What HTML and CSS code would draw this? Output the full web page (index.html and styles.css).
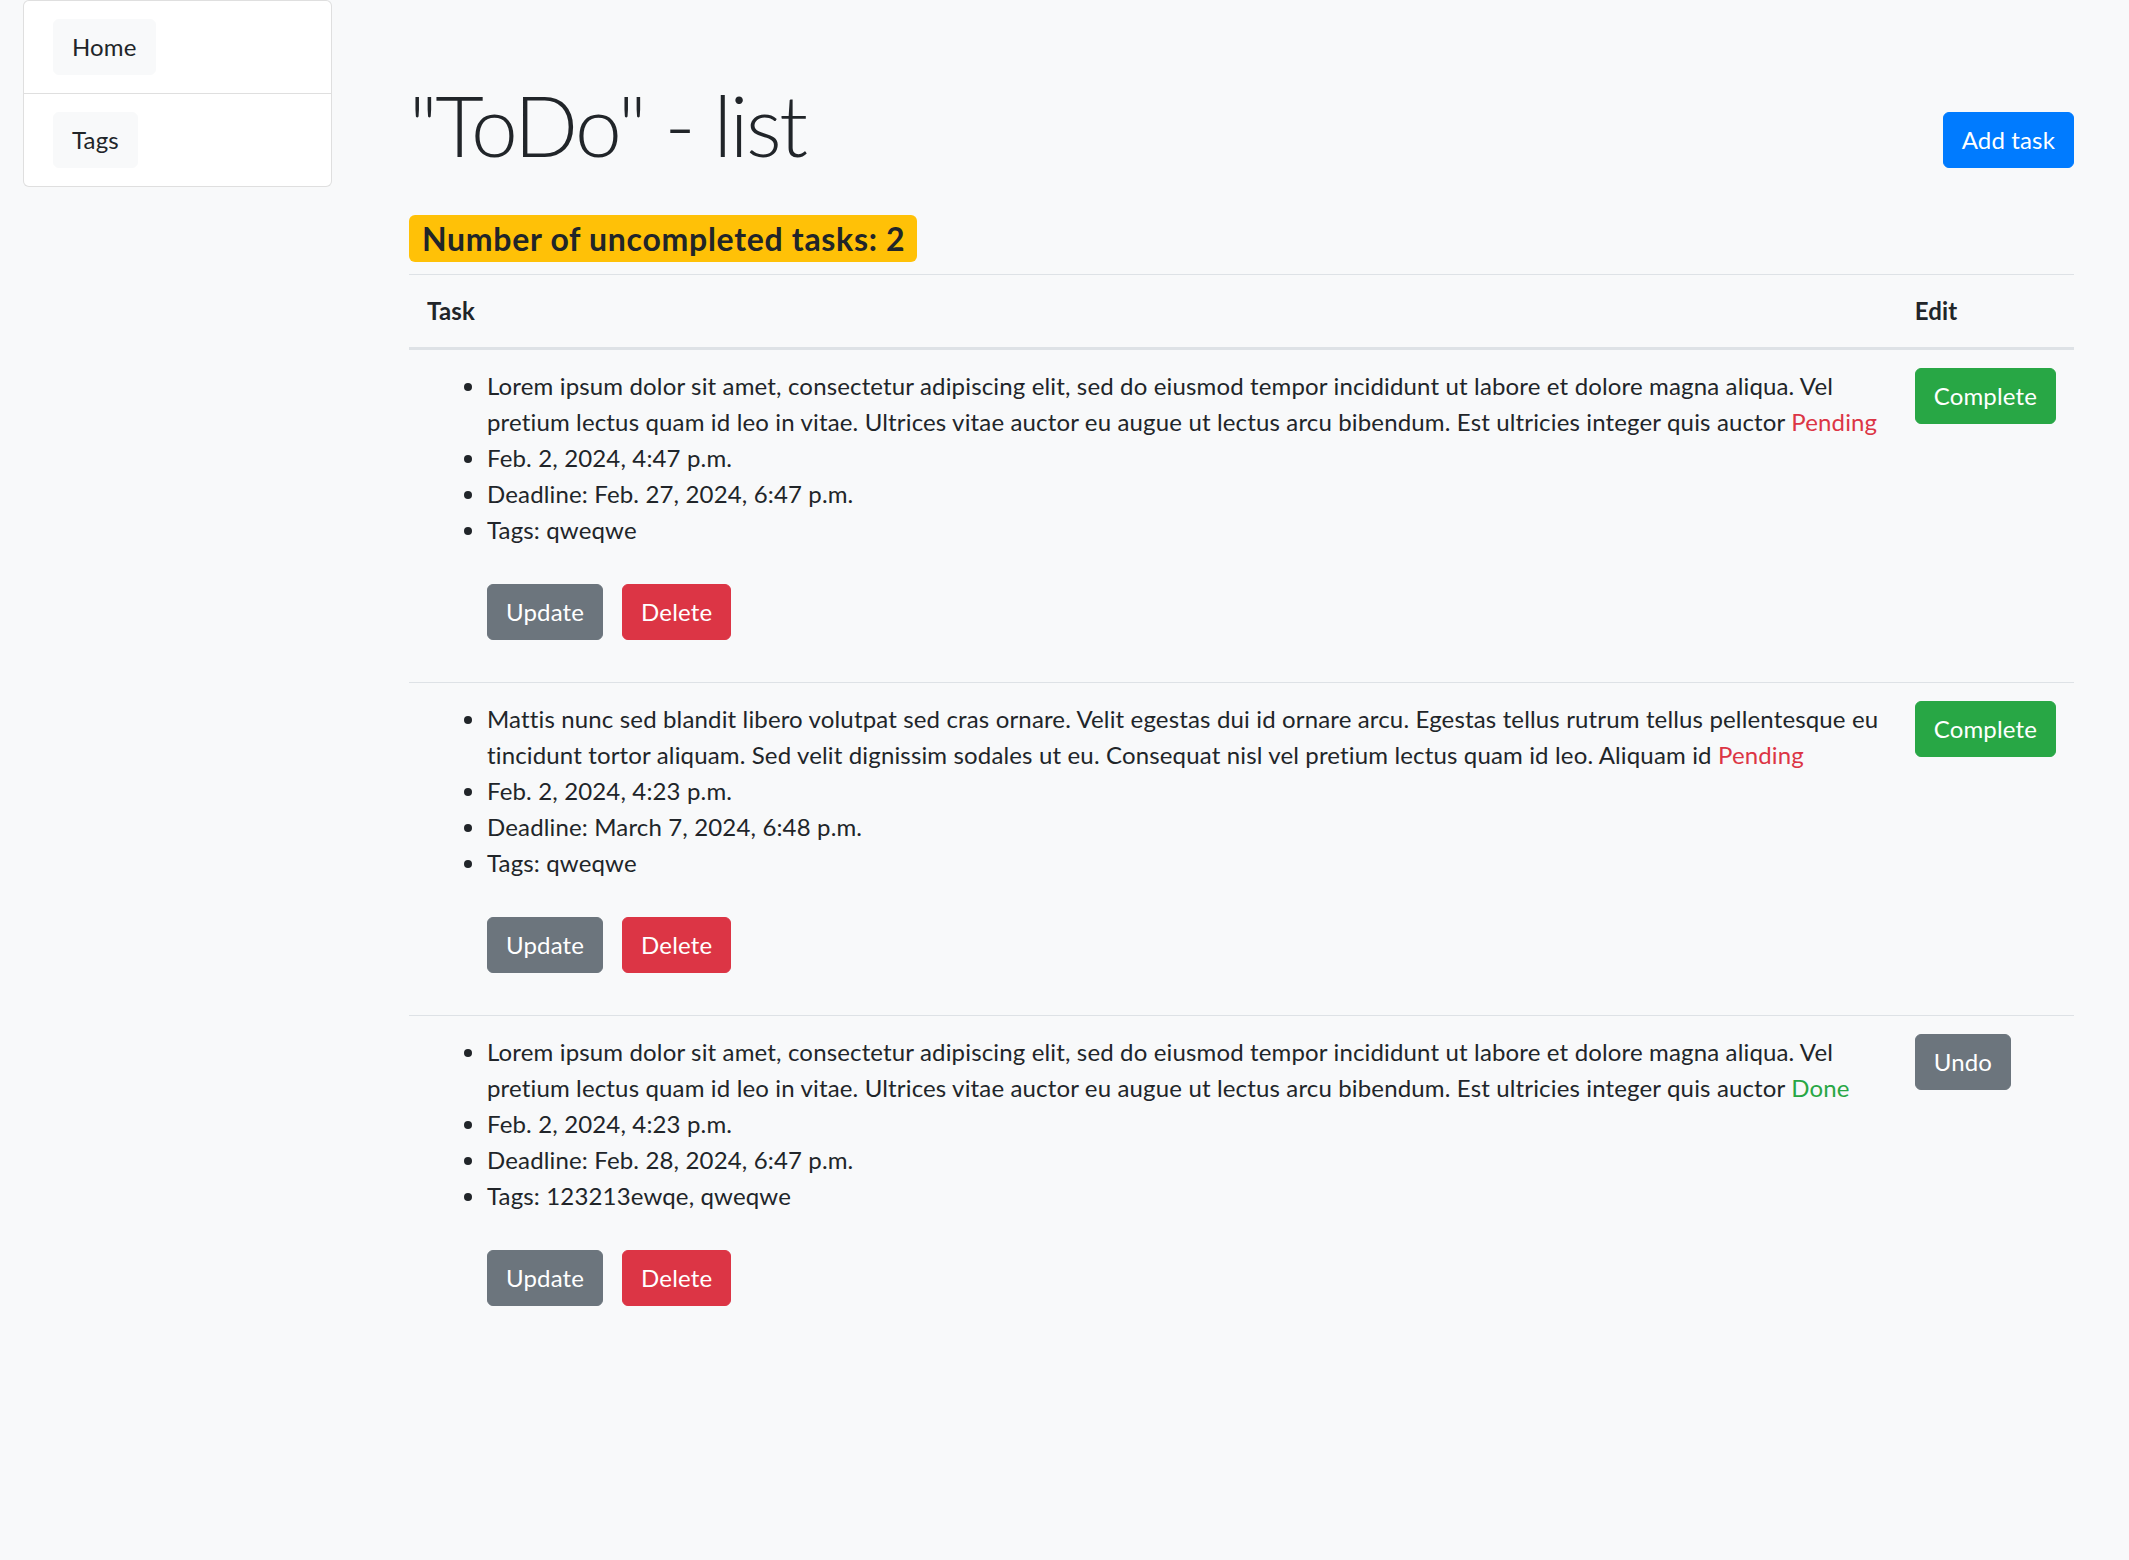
FILE: index.html
```html
<!DOCTYPE html>
<html lang="en">
<head>
<meta charset="utf-8">
<title>ToDo list</title>
<link rel="stylesheet" href="styles.css">
</head>
<body>
<div class="page">
  <aside class="sidebar">
    <div class="card">
      <div class="card-item"><a class="btn btn-light" href="#">Home</a></div>
      <div class="card-item"><a class="btn btn-light" href="#">Tags</a></div>
    </div>
  </aside>
  <main class="main">
    <div class="title-row">
      <h1 class="title">"ToDo" - list</h1>
      <a class="btn btn-primary add-btn" href="#">Add task</a>
    </div>
    <div class="count"><span class="badge">Number of uncompleted tasks: 2</span></div>
    <table class="table">
      <thead>
        <tr><th>Task</th><th class="col-edit">Edit</th></tr>
      </thead>
      <tbody>
        <tr>
          <td>
            <ul class="task-list">
              <li>Lorem ipsum dolor sit amet, consectetur adipiscing elit, sed do eiusmod tempor incididunt ut labore et dolore magna aliqua. Vel pretium lectus quam id leo in vitae. Ultrices vitae auctor eu augue ut lectus arcu bibendum. Est ultricies integer quis auctor <span class="text-danger">Pending</span></li>
              <li>Feb. 2, 2024, 4:47 p.m.</li>
              <li>Deadline: Feb. 27, 2024, 6:47 p.m.</li>
              <li>Tags: qweqwe</li>
            </ul>
            <div class="actions">
              <a class="btn btn-secondary" href="#">Update</a>
              <a class="btn btn-danger" href="#">Delete</a>
            </div>
          </td>
          <td class="col-edit"><a class="btn btn-success" href="#">Complete</a></td>
        </tr>
        <tr>
          <td>
            <ul class="task-list">
              <li>Mattis nunc sed blandit libero volutpat sed cras ornare. Velit egestas dui id ornare arcu. Egestas tellus rutrum tellus pellentesque eu tincidunt tortor aliquam. Sed velit dignissim sodales ut eu. Consequat nisl vel pretium lectus quam id leo. Aliquam id <span class="text-danger">Pending</span></li>
              <li>Feb. 2, 2024, 4:23 p.m.</li>
              <li>Deadline: March 7, 2024, 6:48 p.m.</li>
              <li>Tags: qweqwe</li>
            </ul>
            <div class="actions">
              <a class="btn btn-secondary" href="#">Update</a>
              <a class="btn btn-danger" href="#">Delete</a>
            </div>
          </td>
          <td class="col-edit"><a class="btn btn-success" href="#">Complete</a></td>
        </tr>
        <tr>
          <td>
            <ul class="task-list">
              <li>Lorem ipsum dolor sit amet, consectetur adipiscing elit, sed do eiusmod tempor incididunt ut labore et dolore magna aliqua. Vel pretium lectus quam id leo in vitae. Ultrices vitae auctor eu augue ut lectus arcu bibendum. Est ultricies integer quis auctor <span class="text-success">Done</span></li>
              <li>Feb. 2, 2024, 4:23 p.m.</li>
              <li>Deadline: Feb. 28, 2024, 6:47 p.m.</li>
              <li>Tags: 123213ewqe, qweqwe</li>
            </ul>
            <div class="actions">
              <a class="btn btn-secondary" href="#">Update</a>
              <a class="btn btn-danger" href="#">Delete</a>
            </div>
          </td>
          <td class="col-edit"><a class="btn btn-secondary" href="#">Undo</a></td>
        </tr>
      </tbody>
    </table>
  </main>
</div>
</body>
</html>
```
FILE: styles.css
```css
* { box-sizing: border-box; }

html, body {
  margin: 0;
  padding: 0;
}

body {
  background: #f8f9fa;
  color: #212529;
  font-family: Lato, "Liberation Sans", sans-serif;
  font-size: 24px;
  line-height: 1.5;
  letter-spacing: 0.15px;
  min-height: 1560px;
}

.page {
  display: grid;
  grid-template-columns: 309px 1fr;
  column-gap: 77px;
  padding: 0 55px 0 23px;
}

/* Sidebar */
.card {
  background: #fff;
  border: 1px solid rgba(0, 0, 0, 0.125);
  border-radius: 6px;
  overflow: hidden;
}

.card-item {
  padding: 18px 29px;
}

.card-item + .card-item {
  border-top: 1px solid rgba(0, 0, 0, 0.125);
}

/* Buttons */
.btn {
  display: inline-block;
  font-size: 24px;
  font-weight: 400;
  line-height: 36px;
  padding: 9px 18px;
  border: 1px solid transparent;
  border-radius: 6px;
  text-decoration: none;
  color: #fff;
  white-space: nowrap;
  text-align: center;
}

.btn-light { background: #f8f9fa; border-color: #f8f9fa; color: #212529; }
.btn-primary { background: #007bff; border-color: #007bff; }
.btn-secondary { background: #6c757d; border-color: #6c757d; }
.btn-danger { background: #dc3545; border-color: #dc3545; }
.btn-success { background: #28a745; border-color: #28a745; }

/* Main */
.main {
  padding-top: 75px;
}

.title-row {
  display: flex;
  justify-content: space-between;
  align-items: flex-start;
}

.title {
  margin: 0 0 12px;
  font-size: 84px;
  font-weight: 300;
  line-height: 1.2;
  letter-spacing: -2.4px;
}

.add-btn {
  margin-top: 37px;
}

.count {
  display: flex;
  margin: 27px 0 12px;
}

.badge {
  display: block;
  background: #ffc107;
  color: #212529;
  font-size: 32px;
  font-weight: 700;
  line-height: 1;
  letter-spacing: 0.7px;
  padding: 8px 12px 7px 13px;
  border-radius: 6px;
}

/* Table */
.table {
  width: 100%;
  border-collapse: collapse;
}

.table th,
.table td {
  padding: 18px;
  border-top: 1px solid #dee2e6;
  vertical-align: top;
  text-align: left;
}

.table thead th {
  font-weight: 700;
  vertical-align: bottom;
  border-bottom: 3px solid #dee2e6;
}

.col-edit {
  width: 139px;
}

.task-list {
  margin: 0;
  padding-left: 60px;
}

.actions {
  display: flex;
  gap: 19px;
  margin: 36px 0 24px 60px;
}

.text-danger { color: #dc3545; }
.text-success { color: #28a745; }
```
